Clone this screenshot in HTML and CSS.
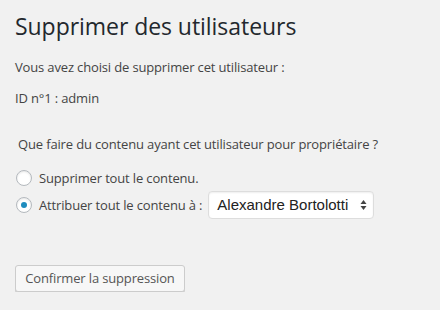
FILE: index.html
```html
<!DOCTYPE html>
<html lang="fr">
<head>
    <meta charset="UTF-8">
    <title>Supprimer des utilisateurs</title>
    <link rel="stylesheet" href="styles.css">
</head>
<body>
    <div class="wrap">
        <h1>Supprimer des utilisateurs</h1>
        <p>Vous avez choisi de supprimer cet utilisateur :</p>
        <p>ID n°1 : admin</p>

        <fieldset class="delete-options">
            <p class="legend">Que faire du contenu ayant cet utilisateur pour propriétaire ?</p>
            <div class="option">
                <span class="radio"></span>
                <span>Supprimer tout le contenu.</span>
            </div>
            <div class="option">
                <span class="radio checked"></span>
                <span>Attribuer tout le contenu à :</span>
                <div class="select">
                    <span>Alexandre Bortolotti</span>
                    <svg width="7" height="12" viewBox="0 0 7 12">
                        <path d="M3.5 1 L6.5 5 L0.5 5 Z" fill="#444"/>
                        <path d="M3.5 11 L6.5 7 L0.5 7 Z" fill="#444"/>
                    </svg>
                </div>
            </div>
        </fieldset>

        <button class="button">Confirmer la suppression</button>
    </div>
</body>
</html>
```

FILE: styles.css
```css
body {
    margin: 0;
    background: #f1f1f1;
    font-family: 'Open Sans', sans-serif;
    font-size: 13px;
    letter-spacing: -0.15px;
    color: #444;
}

.wrap {
    padding: 12px 15px 0 15px;
}

h1 {
    margin: 0;
    font-size: 23px;
    font-weight: 400;
    line-height: 29px;
    letter-spacing: -0.05px;
    color: #23282d;
}

p {
    margin: 17px 0 0 0;
    line-height: 18px;
}

p + p {
    margin-top: 13px;
}

.delete-options {
    border: 0;
    margin: 28px 0 0 0;
    padding: 0;
}

.delete-options .legend {
    margin: 0 0 11px 3px;
}

.option {
    display: flex;
    align-items: center;
    gap: 7px;
    height: 27px;
}

.radio {
    width: 14px;
    height: 14px;
    margin-left: 1px;
    border: 1px solid #b4b9be;
    border-radius: 50%;
    background: #fff;
    box-shadow: inset 0 1px 2px rgba(0, 0, 0, 0.1);
    display: flex;
    align-items: center;
    justify-content: center;
    flex-shrink: 0;
}

.radio.checked::before {
    content: "";
    width: 6px;
    height: 6px;
    border-radius: 50%;
    background: #1e8cbe;
}

.select {
    margin-left: -1px;
    box-sizing: border-box;
    width: 166px;
    height: 28px;
    padding: 0 6px 0 8px;
    border: 1px solid #ddd;
    border-radius: 4px;
    background: #fff;
    box-shadow: inset 0 1px 2px rgba(0, 0, 0, 0.07);
    display: flex;
    align-items: center;
    justify-content: space-between;
    font-family: 'Liberation Sans', Arial, sans-serif;
    font-size: 15px;
    letter-spacing: 0;
    color: #222;
}

.button {
    margin-top: 47px;
    box-sizing: border-box;
    width: 170px;
    height: 27px;
    padding: 0;
    border: 1px solid #ccc;
    border-radius: 3px;
    background: #f7f7f7;
    box-shadow: 0 1px 0 #ccc;
    font-family: 'Open Sans', sans-serif;
    font-size: 13px;
    letter-spacing: -0.15px;
    color: #555;
    line-height: 25px;
}
```
